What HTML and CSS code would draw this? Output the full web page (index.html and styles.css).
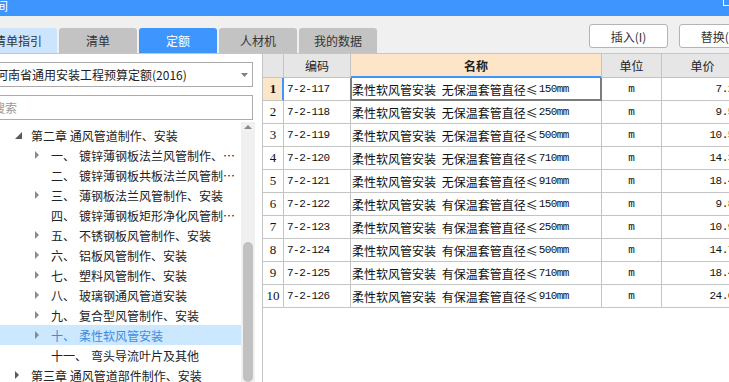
FILE: index.html
```html
<!DOCTYPE html>
<html lang="zh-CN">
<head>
<meta charset="utf-8">
<title>定额</title>
<link rel="stylesheet" href="styles.css">
</head>
<body>
<div class="titlebar"><span class="title">间</span><span class="winbtn"></span></div>
<div class="toolbar">
  <div class="tabs">
    <div class="tab tab-guide">清单指引</div>
    <div class="tab">清单</div>
    <div class="tab tab-active">定额</div>
    <div class="tab">人材机</div>
    <div class="tab">我的数据</div>
  </div>
  <div class="actions">
    <button class="btn">插入(I)</button>
    <button class="btn">替换(I)</button>
  </div>
</div>
<div class="main">
  <aside class="left">
    <div class="select"><span>河南省通用安装工程预算定额(2016)</span><svg class="caret" width="7" height="4" viewBox="0 0 7 4"><polygon points="0,0 7,0 3.5,4" fill="#808080"/></svg></div>
    <div class="search">搜索</div>
    <div class="treewrap">
      <ul class="tree">
        <li class="node l1"><i class="tw"><svg width="7" height="7" viewBox="0 0 7 7"><polygon points="7,0 7,7 0,7" fill="#5a5a5a"/></svg></i><span class="name">第二章 通风管道制作、安装</span></li>
        <li class="node l2"><i class="tw"><svg width="4" height="8" viewBox="0 0 4 8"><polygon points="0,0 4,4 0,8" fill="#8a8a8a"/></svg></i><span class="no">一、</span><span class="name">镀锌薄钢板法兰风管制作、安装</span></li>
        <li class="node l2"><i class="tw"></i><span class="no">二、</span><span class="name">镀锌薄钢板共板法兰风管制作、安装</span></li>
        <li class="node l2"><i class="tw"><svg width="4" height="8" viewBox="0 0 4 8"><polygon points="0,0 4,4 0,8" fill="#8a8a8a"/></svg></i><span class="no">三、</span><span class="name">薄钢板法兰风管制作、安装</span></li>
        <li class="node l2"><i class="tw"></i><span class="no">四、</span><span class="name">镀锌薄钢板矩形净化风管制作、安装</span></li>
        <li class="node l2"><i class="tw"><svg width="4" height="8" viewBox="0 0 4 8"><polygon points="0,0 4,4 0,8" fill="#8a8a8a"/></svg></i><span class="no">五、</span><span class="name">不锈钢板风管制作、安装</span></li>
        <li class="node l2"><i class="tw"><svg width="4" height="8" viewBox="0 0 4 8"><polygon points="0,0 4,4 0,8" fill="#8a8a8a"/></svg></i><span class="no">六、</span><span class="name">铝板风管制作、安装</span></li>
        <li class="node l2"><i class="tw"><svg width="4" height="8" viewBox="0 0 4 8"><polygon points="0,0 4,4 0,8" fill="#8a8a8a"/></svg></i><span class="no">七、</span><span class="name">塑料风管制作、安装</span></li>
        <li class="node l2"><i class="tw"><svg width="4" height="8" viewBox="0 0 4 8"><polygon points="0,0 4,4 0,8" fill="#8a8a8a"/></svg></i><span class="no">八、</span><span class="name">玻璃钢通风管道安装</span></li>
        <li class="node l2"><i class="tw"><svg width="4" height="8" viewBox="0 0 4 8"><polygon points="0,0 4,4 0,8" fill="#8a8a8a"/></svg></i><span class="no">九、</span><span class="name">复合型风管制作、安装</span></li>
        <li class="node l2 sel"><i class="tw"><svg width="4" height="8" viewBox="0 0 4 8"><polygon points="0,0 4,4 0,8" fill="#8a8a8a"/></svg></i><span class="no">十、</span><span class="name">柔性软风管安装</span></li>
        <li class="node l2"><i class="tw"></i><span class="no">十一、</span><span class="name">弯头导流叶片及其他</span></li>
        <li class="node l1"><i class="tw"><svg width="4" height="8" viewBox="0 0 4 8"><polygon points="0,0 4,4 0,8" fill="#5a5a5a"/></svg></i><span class="name">第三章 通风管道部件制作、安装</span></li>
      </ul>
      <div class="vscroll">
        <div class="vs-up"><svg width="8" height="4" viewBox="0 0 8 4"><polygon points="0,4 8,4 4,0" fill="#8a8a8a"/></svg></div>
        <div class="vs-thumb"></div>
      </div>
    </div>
  </aside>
  <section class="gridpane">
    <div class="grid">
      <div class="hd rn"></div><div class="hd">编码</div><div class="hd hd-active">名称</div><div class="hd">单位</div><div class="hd">单价</div>

      <div class="c rn rn-active">1</div><div class="c code code-active">7-2-117</div><div class="c nm sel">柔性软风管安装 无保温套管直径≤<span class="lat">150mm</span></div><div class="c unit">m</div><div class="c price">7.25</div>
      <div class="c rn">2</div><div class="c code">7-2-118</div><div class="c nm">柔性软风管安装 无保温套管直径≤<span class="lat">250mm</span></div><div class="c unit">m</div><div class="c price">9.53</div>
      <div class="c rn">3</div><div class="c code">7-2-119</div><div class="c nm">柔性软风管安装 无保温套管直径≤<span class="lat">500mm</span></div><div class="c unit">m</div><div class="c price">10.57</div>
      <div class="c rn">4</div><div class="c code">7-2-120</div><div class="c nm">柔性软风管安装 无保温套管直径≤<span class="lat">710mm</span></div><div class="c unit">m</div><div class="c price">14.39</div>
      <div class="c rn">5</div><div class="c code">7-2-121</div><div class="c nm">柔性软风管安装 无保温套管直径≤<span class="lat">910mm</span></div><div class="c unit">m</div><div class="c price">18.42</div>
      <div class="c rn">6</div><div class="c code">7-2-122</div><div class="c nm">柔性软风管安装 有保温套管直径≤<span class="lat">150mm</span></div><div class="c unit">m</div><div class="c price">9.86</div>
      <div class="c rn">7</div><div class="c code">7-2-123</div><div class="c nm">柔性软风管安装 有保温套管直径≤<span class="lat">250mm</span></div><div class="c unit">m</div><div class="c price">10.95</div>
      <div class="c rn">8</div><div class="c code">7-2-124</div><div class="c nm">柔性软风管安装 有保温套管直径≤<span class="lat">500mm</span></div><div class="c unit">m</div><div class="c price">14.72</div>
      <div class="c rn">9</div><div class="c code">7-2-125</div><div class="c nm">柔性软风管安装 有保温套管直径≤<span class="lat">710mm</span></div><div class="c unit">m</div><div class="c price">18.45</div>
      <div class="c rn">10</div><div class="c code">7-2-126</div><div class="c nm">柔性软风管安装 有保温套管直径≤<span class="lat">910mm</span></div><div class="c unit">m</div><div class="c price">24.06</div>
    </div>
  </section>
</div>
</body>
</html>
```
FILE: styles.css
```css
html, body {
  margin: 0;
  padding: 0;
}
body {
  width: 729px;
  height: 382px;
  overflow: hidden;
  background: #fff;
  font-family: "Noto Sans CJK SC", "Noto Sans", sans-serif;
  font-size: 12px;
  color: #222;
}

/* title bar */
.titlebar {
  height: 16px;
  background: #3d95fd;
  display: flex;
  align-items: flex-start;
  color: #fff;
  overflow: hidden;
}
.title {
  margin-left: -4px;
  margin-top: 0;
  font-size: 12px;
  line-height: 12px;
}
.winbtn {
  margin-left: auto;
  margin-right: -8px;
  margin-top: -6px;
  width: 12px;
  height: 10px;
  border: 1px solid #fff;
  flex-shrink: 0;
}

/* toolbar with tabs */
.toolbar {
  height: 37px;
  background: #f0f0f0;
  border-bottom: 1px solid #c6c6c6;
  display: flex;
  overflow: hidden;
}
.tabs {
  display: flex;
  gap: 2px;
  align-self: flex-end;
  margin-left: -21px;
}
.tab {
  width: 78px;
  height: 25px;
  line-height: 25px;
  text-align: center;
  background: #c3c3c3;
  color: #333;
  border-radius: 3px 3px 0 0;
  flex-shrink: 0;
}
.tab-guide {
  background: #cce4fc;
}
.tab-active {
  background: #3d95fd;
  color: #fff;
}
.actions {
  display: flex;
  gap: 11px;
  margin-left: 212px;
  margin-top: 8px;
  align-self: flex-start;
}
.btn {
  width: 79px;
  height: 24px;
  flex-shrink: 0;
  padding: 0;
  background: #fff;
  border: 1px solid #b4b4b4;
  border-radius: 3px;
  font-family: inherit;
  font-size: 12px;
  color: #333;
}

/* main area */
.main {
  display: flex;
  height: 328px;
}
.left {
  width: 262px;
  flex-shrink: 0;
  background: #fff;
  overflow: hidden;
  padding-top: 8px;
  box-sizing: border-box;
}
.select {
  margin-left: -10px;
  width: 263px;
  height: 25px;
  box-sizing: border-box;
  border: 1px solid #ababab;
  display: flex;
  align-items: center;
  padding-left: 5px;
  color: #222;
  white-space: nowrap;
}
.caret {
  margin-left: auto;
  margin-right: 4px;
  flex-shrink: 0;
}
.search {
  margin-left: -10px;
  margin-top: 8px;
  width: 263px;
  height: 25px;
  box-sizing: border-box;
  border: 1px solid #ababab;
  padding-left: 2px;
  line-height: 23px;
  color: #9a9a9a;
}
.treewrap {
  display: flex;
  margin-top: 2px;
  height: 260px;
}
.tree {
  list-style: none;
  margin: 0;
  padding: 3px 0 0;
  width: 241px;
  flex-shrink: 0;
}
.node {
  height: 20px;
  display: flex;
  align-items: center;
  white-space: nowrap;
  padding-right: 4px;
  color: #222;
}
.node.l1 {
  padding-left: 15px;
}
.node.l2 {
  padding-left: 35px;
}
.node.sel {
  background: #cce8ff;
  color: #3b8de0;
}
.tw {
  width: 16px;
  flex-shrink: 0;
  display: flex;
  align-items: center;
}
.no {
  margin-right: 4px;
  flex-shrink: 0;
}
.name {
  overflow: hidden;
  text-overflow: ellipsis;
  min-width: 0;
}
.vscroll {
  width: 14px;
  flex-shrink: 0;
  background: #f0f0f0;
  display: flex;
  flex-direction: column;
  align-items: center;
}
.vs-up {
  height: 12px;
  display: flex;
  align-items: center;
}
.vs-thumb {
  margin-top: 109px;
  width: 10px;
  height: 160px;
  border-radius: 5px;
  background: #c1c1c1;
}

/* grid */
.gridpane {
  flex: 1;
  min-width: 0;
  overflow: hidden;
  border-left: 1px solid #c4c4c4;
  background: #fff;
}
.grid {
  display: grid;
  grid-template-columns: 21px 67px 251px 60px 82px;
  grid-template-rows: 24px;
  grid-auto-rows: 23px;
  width: 481px;
}
.grid > div {
  box-sizing: border-box;
  border-right: 1px solid #c4c4c4;
  border-bottom: 1px solid #c4c4c4;
  display: flex;
  align-items: center;
  white-space: nowrap;
  overflow: hidden;
}
.hd {
  background: #e6e6e6;
  justify-content: center;
  color: #222;
}
.hd-active {
  background: #fde5c9;
  font-weight: bold;
  box-shadow: inset 0 -1px #3d95fd;
  border-bottom-color: #3d95fd !important;
}
.c {
  color: #111;
}
.rn {
  justify-content: center;
  font-family: "Liberation Serif", serif;
  font-size: 13px;
}
.rn-active {
  background: #fde5c9;
  font-weight: bold;
  border-right-color: #3d95fd !important;
  box-shadow: inset -1px 0 #3d95fd;
}
.code {
  padding-left: 3px;
  font-family: "Liberation Mono", monospace;
  font-size: 11px;
  letter-spacing: -0.5px;
}
.code-active {
  border-right-color: #7d7d7d !important;
}
.nm {
  padding-left: 1px;
  word-spacing: 3px;
}
.nm .lat {
  margin-left: 1px;
  font-family: "Liberation Mono", monospace;
  font-size: 11px;
  letter-spacing: -0.6px;
}
.nm.sel {
  border-right-color: #7d7d7d !important;
  border-bottom-color: #7d7d7d !important;
  box-shadow: inset 1px 0 #7d7d7d, inset -1px 0 #7d7d7d, inset 0 -1px #7d7d7d;
}
.unit {
  justify-content: center;
  font-family: "Liberation Mono", monospace;
  font-size: 11px;
}
.price {
  justify-content: flex-end;
  padding-right: 3px;
  font-family: "Liberation Mono", monospace;
  font-size: 11px;
  letter-spacing: -0.5px;
}
```
